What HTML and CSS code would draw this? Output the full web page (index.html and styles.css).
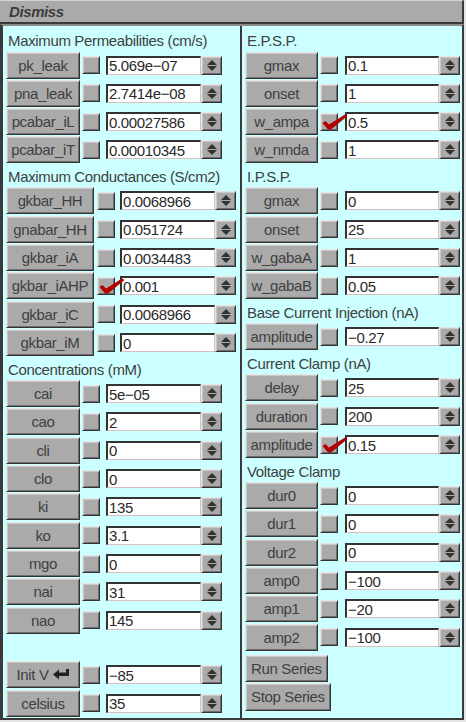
FILE: index.html
```html
<!DOCTYPE html>
<html>
<head>
<meta charset="utf-8">
<link rel="stylesheet" href="styles.css">
</head>
<body>
<div class="window">
  <div class="titlebar"><span class="title">Dismiss</span></div>
  <div class="panel">
    <div class="col col-left">
      <div class="hdr">Maximum Permeabilities (cm/s)</div>
      <div class="row sa"><div class="btn">pk_leak</div><div class="cb"></div><div class="fld">5.069e−07</div><div class="spin"></div></div>
      <div class="row sa"><div class="btn">pna_leak</div><div class="cb"></div><div class="fld">2.7414e−08</div><div class="spin"></div></div>
      <div class="row sa"><div class="btn">pcabar_iL</div><div class="cb"></div><div class="fld">0.00027586</div><div class="spin"></div></div>
      <div class="row sa"><div class="btn">pcabar_iT</div><div class="cb"></div><div class="fld">0.00010345</div><div class="spin"></div></div>
      <div class="hdr">Maximum Conductances (S/cm2)</div>
      <div class="row sb"><div class="btn">gkbar_HH</div><div class="cb"></div><div class="fld">0.0068966</div><div class="spin"></div></div>
      <div class="row sb"><div class="btn">gnabar_HH</div><div class="cb"></div><div class="fld">0.051724</div><div class="spin"></div></div>
      <div class="row sb"><div class="btn">gkbar_iA</div><div class="cb"></div><div class="fld">0.0034483</div><div class="spin"></div></div>
      <div class="row sb"><div class="btn">gkbar_iAHP</div><div class="cb"><svg class="check" width="28" height="18" viewBox="0 0 28 18"><polygon points="1.5,10 4.5,8 8,11.5 24,1.5 26.5,3 10,16.5 7,16.5"/></svg></div><div class="fld">0.001</div><div class="spin"></div></div>
      <div class="row sb"><div class="btn">gkbar_iC</div><div class="cb"></div><div class="fld">0.0068966</div><div class="spin"></div></div>
      <div class="row sb"><div class="btn">gkbar_iM</div><div class="cb"></div><div class="fld">0</div><div class="spin"></div></div>
      <div class="hdr">Concentrations (mM)</div>
      <div class="row sa"><div class="btn">cai</div><div class="cb"></div><div class="fld">5e−05</div><div class="spin"></div></div>
      <div class="row sa"><div class="btn">cao</div><div class="cb"></div><div class="fld">2</div><div class="spin"></div></div>
      <div class="row sa"><div class="btn">cli</div><div class="cb"></div><div class="fld">0</div><div class="spin"></div></div>
      <div class="row sa"><div class="btn">clo</div><div class="cb"></div><div class="fld">0</div><div class="spin"></div></div>
      <div class="row sa"><div class="btn">ki</div><div class="cb"></div><div class="fld">135</div><div class="spin"></div></div>
      <div class="row sa"><div class="btn">ko</div><div class="cb"></div><div class="fld">3.1</div><div class="spin"></div></div>
      <div class="row sa"><div class="btn">mgo</div><div class="cb"></div><div class="fld">0</div><div class="spin"></div></div>
      <div class="row sa"><div class="btn">nai</div><div class="cb"></div><div class="fld">31</div><div class="spin"></div></div>
      <div class="row sa"><div class="btn">nao</div><div class="cb"></div><div class="fld">145</div><div class="spin"></div></div>
      <div class="spacer"></div>
      <div class="row sa"><div class="btn">Init V<svg class="ret" width="17" height="11" viewBox="0 0 17 11"><path d="M0,5.5 L6,0.5 L6,3.5 L13,3.5 L13,0 L16,0 L16,7 L6,7 L6,10.5 Z"/></svg></div><div class="cb"></div><div class="fld">−85</div><div class="spin"></div></div>
      <div class="row sa"><div class="btn">celsius</div><div class="cb"></div><div class="fld">35</div><div class="spin"></div></div>
    </div>
    <div class="col col-right">
      <div class="hdr">E.P.S.P.</div>
      <div class="row sr"><div class="btn">gmax</div><div class="cb"></div><div class="fld">0.1</div><div class="spin"></div></div>
      <div class="row sr"><div class="btn">onset</div><div class="cb"></div><div class="fld">1</div><div class="spin"></div></div>
      <div class="row sr"><div class="btn">w_ampa</div><div class="cb"><svg class="check" width="28" height="18" viewBox="0 0 28 18"><polygon points="1.5,10 4.5,8 8,11.5 24,1.5 26.5,3 10,16.5 7,16.5"/></svg></div><div class="fld">0.5</div><div class="spin"></div></div>
      <div class="row sr"><div class="btn">w_nmda</div><div class="cb"></div><div class="fld">1</div><div class="spin"></div></div>
      <div class="hdr">I.P.S.P.</div>
      <div class="row sr"><div class="btn">gmax</div><div class="cb"></div><div class="fld">0</div><div class="spin"></div></div>
      <div class="row sr"><div class="btn">onset</div><div class="cb"></div><div class="fld">25</div><div class="spin"></div></div>
      <div class="row sr"><div class="btn">w_gabaA</div><div class="cb"></div><div class="fld">1</div><div class="spin"></div></div>
      <div class="row sr"><div class="btn">w_gabaB</div><div class="cb"></div><div class="fld">0.05</div><div class="spin"></div></div>
      <div class="hdr">Base Current Injection (nA)</div>
      <div class="row sr"><div class="btn">amplitude</div><div class="cb"></div><div class="fld">−0.27</div><div class="spin"></div></div>
      <div class="hdr">Current Clamp (nA)</div>
      <div class="row sr"><div class="btn">delay</div><div class="cb"></div><div class="fld">25</div><div class="spin"></div></div>
      <div class="row sr"><div class="btn">duration</div><div class="cb"></div><div class="fld">200</div><div class="spin"></div></div>
      <div class="row sr"><div class="btn">amplitude</div><div class="cb"><svg class="check" width="28" height="18" viewBox="0 0 28 18"><polygon points="1.5,10 4.5,8 8,11.5 24,1.5 26.5,3 10,16.5 7,16.5"/></svg></div><div class="fld">0.15</div><div class="spin"></div></div>
      <div class="hdr">Voltage Clamp</div>
      <div class="row sr"><div class="btn">dur0</div><div class="cb"></div><div class="fld">0</div><div class="spin"></div></div>
      <div class="row sr"><div class="btn">dur1</div><div class="cb"></div><div class="fld">0</div><div class="spin"></div></div>
      <div class="row sr"><div class="btn">dur2</div><div class="cb"></div><div class="fld">0</div><div class="spin"></div></div>
      <div class="row sr"><div class="btn">amp0</div><div class="cb"></div><div class="fld">−100</div><div class="spin"></div></div>
      <div class="row sr"><div class="btn">amp1</div><div class="cb"></div><div class="fld">−20</div><div class="spin"></div></div>
      <div class="row sr"><div class="btn">amp2</div><div class="cb"></div><div class="fld">−100</div><div class="spin"></div></div>
      <div class="actions">
        <div class="btn plain run">Run Series</div>
        <div class="btn plain stop">Stop Series</div>
      </div>
    </div>
  </div>
</div>
</body>
</html>
```

FILE: styles.css
```css
* { box-sizing: border-box; }

body {
  margin: 0;
  background: #e4e4e4;
  font-family: "Liberation Sans", Arial, sans-serif;
  font-size: 15px;
  letter-spacing: -0.35px;
  color: #404040;
}

.window {
  width: 464px;
  height: 720px;
}

.titlebar {
  height: 24px;
  background: #aaaaaa;
  border-top: 1px solid #d2d2d2;
  border-bottom: 2px solid #3a3a3a;
  border-right: 2px solid #3a3a3a;
  padding-left: 9px;
  display: flex;
  align-items: center;
}

.title {
  font-weight: bold;
  font-style: italic;
  color: #3c3c3c;
  letter-spacing: -0.4px;
}

.panel {
  display: flex;
  height: 696px;
  background: #ccffff;
  border-top: 2px solid #8a8a8a;
  border-left: 3px solid #3a3a3a;
  border-right: 2px solid #3a3a3a;
  border-bottom: 2px solid #3a3a3a;
}

.col {
  padding: 2.2px 0 0 3px;
}

.col-left {
  width: 239px;
  border-right: 2px solid #3a3a3a;
}

.col-right {
  flex: 1;
}

.hdr {
  height: 22.67px;
  padding: 2px 0 0 2px;
  display: flex;
  align-items: center;
  white-space: nowrap;
}

.row {
  height: 28.33px;
  display: flex;
  align-items: center;
}

.spacer {
  height: 26.4px;
}

.btn {
  height: 27px;
  display: flex;
  align-items: center;
  justify-content: center;
  background: #aaaaaa;
  border: 1px solid;
  border-color: #e6e6e6 #333333 #333333 #e6e6e6;
  box-shadow: inset 1px 1px 0 #c9c9c9, inset -1px -1px 0 #6e6e6e;
  white-space: nowrap;
  flex-shrink: 0;
}

.cb {
  position: relative;
  width: 18px;
  height: 18px;
  background: #aaaaaa;
  border: 1px solid;
  border-color: #e6e6e6 #333333 #333333 #e6e6e6;
  box-shadow: inset 1px 1px 0 #c9c9c9, inset -1px -1px 0 #6e6e6e;
  flex-shrink: 0;
}

.check {
  position: absolute;
  left: 0;
  top: -1px;
  overflow: visible;
  fill: #b00000;
}

.fld {
  width: 95px;
  height: 19px;
  background: #ffffff;
  border-style: solid;
  border-width: 2px 1px 1px 2px;
  border-color: #333333 #dcbcbc #dcbcbc #333333;
  padding-left: 1px;
  display: flex;
  align-items: center;
  color: #2a2a2a;
  white-space: nowrap;
  overflow: hidden;
  flex-shrink: 0;
}

.spin {
  width: 21px;
  height: 19px;
  background: #aaaaaa;
  border: 1px solid;
  border-color: #e6e6e6 #333333 #333333 #e6e6e6;
  box-shadow: inset 1px 1px 0 #c9c9c9, inset -1px -1px 0 #6e6e6e;
  display: flex;
  flex-direction: column;
  align-items: center;
  justify-content: center;
  gap: 1px;
  flex-shrink: 0;
}

.spin::before {
  content: "";
  border-left: 5px solid transparent;
  border-right: 5px solid transparent;
  border-bottom: 5px solid #333333;
}

.spin::after {
  content: "";
  border-left: 5px solid transparent;
  border-right: 5px solid transparent;
  border-top: 5px solid #333333;
}

/* section widths */
.sa .btn { width: 74px; }
.sa .cb { margin-left: 2px; }
.sa .fld { margin-left: 6px; }

.sb .btn { width: 88px; }
.sb .cb { margin-left: 3px; }
.sb .fld { margin-left: 5px; }

.sr .btn { width: 73px; }
.sr .cb { margin-left: 2px; }
.sr .fld { margin-left: 7px; width: 94px; }

.ret {
  margin-left: 4px;
  fill: #222222;
}

.actions {
  padding-top: 3.5px;
  display: flex;
  flex-direction: column;
  align-items: flex-start;
  gap: 1px;
}

.plain {
  padding: 0 5px;
}

.stop {
  height: 28px;
}
```
